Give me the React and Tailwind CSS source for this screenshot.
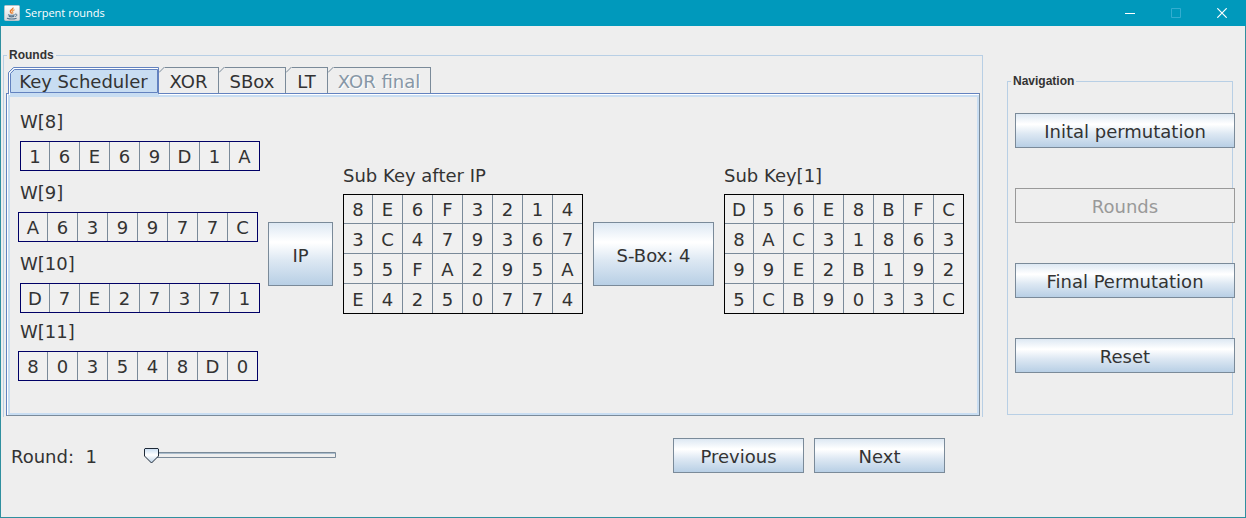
import React from 'react';

const words = [
  { label: 'W[8]', value: '16E69D1A' },
  { label: 'W[9]', value: 'A639977C', shift: true },
  { label: 'W[10]', value: 'D7E27371' },
  { label: 'W[11]', value: '803548D0', shift: true },
];
const afterIp = ['8E6F3214', '3C479367', '55FA295A', 'E4250774'];
const subKey = ['D56E8BFC', '8AC31863', '99E2B192', '5CB9033C'];

const GRADIENT =
  'border border-[#7a8a99] bg-[linear-gradient(to_bottom,#dde8f3_0%,#ffffff_30%,#ffffff_32%,#dde8f3_60%,#b8cfe5_100%)]';

function rowHeight(index, count) {
  if (count === 1) return 'h-7';
  if (index === 0) return 'h-[29px] border-b';
  if (index === count - 1) return 'h-[29px]';
  return 'h-[30px] border-b';
}

function HexTable({ rows, label, navy }) {
  return (
    <table
      aria-label={label}
      className={`w-[240px] table-fixed border-separate border-spacing-0 border bg-[#f0f0f0] ${navy ? 'border-[#000066]' : 'border-black'}`}
    >
      <tbody>
        {rows.map((row, r) => (
          <tr key={r}>
            {row.split('').map((digit, c) => (
              <td
                key={c}
                className={`border-[#7a8a99] p-0 pt-[2px] text-center leading-[26px] ${c < 7 ? 'border-r' : ''} ${c === 0 || c === 7 ? 'w-[29px]' : ''} ${rowHeight(r, rows.length)}`}
              >
                {digit}
              </td>
            ))}
          </tr>
        ))}
      </tbody>
    </table>
  );
}

function Tab({ children, className = '', disabled }) {
  return (
    <button
      type="button"
      role="tab"
      aria-selected="false"
      disabled={disabled}
      className={`relative h-[26px] border-t border-r border-[#7a8a99] pt-[2px] ${className}`}
    >
      <svg className="absolute -top-px left-0" width="6" height="6" viewBox="0 0 6 6" aria-hidden="true">
        <rect width="6" height="6" fill="#eeeeee" />
        <path d="M0 5.5 5.5 0" stroke="#7a8a99" fill="none" />
      </svg>
      {children}
    </button>
  );
}

function SelectedTab({ children }) {
  return (
    <button
      type="button"
      role="tab"
      aria-selected="true"
      className="relative z-10 -mb-[2px] ml-[2px] h-7 w-[151px] px-[2px] pt-[2px]"
    >
      <svg className="absolute inset-0 h-full w-full" viewBox="0 0 151 28" preserveAspectRatio="none" fill="none" aria-hidden="true">
        <path d="M0 5.5L5.5 0H151V28H0Z" fill="#c8ddf2" />
        <path d="M1.5 28V6L6 1.5H150" stroke="#ffffff" />
        <path d="M.5 27V5.5L5.5.5H150.5V27" stroke="#6382bf" />
        <path d="M2.5 25.5V6.5L6.5 2.5H149.5V25.5Z" stroke="#6382bf" />
      </svg>
      <span className="relative">{children}</span>
    </button>
  );
}

function JavaIcon() {
  return (
    <svg width="16" height="16" viewBox="0 0 16 16" fill="none" aria-hidden="true">
      <defs>
        <linearGradient id="tile" x1="0" y1="0" x2="0" y2="1">
          <stop offset="0" stopColor="#ffffff" />
          <stop offset="1" stopColor="#d4d8dc" />
        </linearGradient>
      </defs>
      <rect x=".5" y=".5" width="15" height="15" rx="1" fill="url(#tile)" stroke="#b9c4ca" />
      <path d="M8.9 2.6C9.6 4.2 5.6 5 6.4 6.8 6.8 7.7 7.6 8 7.6 8.7" stroke="#e8792b" strokeWidth="1.5" />
      <path d="M10.6 4.8C8.6 5.4 8 6 8.7 7c.5.8.2 1.2-.3 1.7" stroke="#ef9a4e" strokeWidth="1.2" />
      <path d="M4 9.7c2 .6 5 .6 6.8 0M4.8 11.4c1.6.5 3.8.5 5.4 0M3 13.2c2.4.8 7.3.8 9.6 0" stroke="#54738c" strokeWidth="1.2" />
      <path d="M11 9.2c2.7-.5 2.4 1.8.2 2.3" stroke="#54738c" />
    </svg>
  );
}

function NavButton({ children, disabled }) {
  return (
    <button
      type="button"
      disabled={disabled}
      className={`h-[35px] w-full pt-[3px] ${disabled ? 'border border-[#999999] bg-[#eeeeee] text-[#999999]' : GRADIENT}`}
    >
      {children}
    </button>
  );
}

export default function App() {
  return (
    <div className="flex min-h-screen flex-col border border-t-0 border-[#2f8f9f] bg-[#eeeeee] font-['DejaVu_Sans',sans-serif] text-[18px] leading-6 text-[#333333]">
      <header className="-mx-px flex h-[26px] items-center bg-[#0099bc] pl-1 text-white">
        <JavaIcon />
        <h1 className="ml-[5px] flex-1 font-['Open_Sans',sans-serif] text-[11px] leading-4">Serpent rounds</h1>
        <div className="flex h-full pr-px">
          <button type="button" aria-label="Minimize" className="flex w-[46px] items-center justify-center">
            <svg width="10" height="10" viewBox="0 0 10 10" stroke="#fff"><path d="M0 5.5h10" /></svg>
          </button>
          <button type="button" aria-label="Maximize" disabled className="flex w-[46px] items-center justify-center">
            <svg width="10" height="10" viewBox="0 0 10 10" fill="none" stroke="#33add0"><path d="M.5.5h9v9h-9z" /></svg>
          </button>
          <button type="button" aria-label="Close" className="flex w-[46px] items-center justify-center">
            <svg width="10" height="10" viewBox="0 0 10 10" stroke="#fff" strokeWidth="1.2"><path d="M.3.3l9.4 9.4M9.7.3.3 9.7" /></svg>
          </button>
        </div>
      </header>

      <div className="flex flex-1 gap-6 pr-3 pl-[2px]">
        <main className="min-w-0 flex-1 pt-[23px]">
          <fieldset className="min-w-0 border border-b-0 border-[#b8cfe5] px-[2px] pt-[5px] pb-px">
            <legend className="ml-px px-[2px] font-['Liberation_Sans',sans-serif] text-[12px] leading-[13px] font-bold">Rounds</legend>
            <div role="tablist" className="flex">
              <SelectedTab>Key Scheduler</SelectedTab>
              <Tab className="w-[60px]">XOR</Tab>
              <Tab className="w-[67px]">SBox</Tab>
              <Tab className="w-[42px]">LT</Tab>
              <Tab className="w-[103px] text-[#8797a6] [text-shadow:1px_1px_0_#ffffff]" disabled>XOR final</Tab>
            </div>
            <section role="tabpanel" aria-label="Key Scheduler" className="border border-[#6382bf] border-r-[#7a8a99] border-b-[#7a8a99]">
              <div className="border-t border-l border-white">
                <div className="flex min-h-[320px] items-start gap-[10px] border-2 border-[#c8ddf2] pl-2">
                  <div className="flex w-[242px] flex-col pt-[13px]">
                    {words.map((w, i) => (
                      <div key={w.label} className={i < 2 ? 'h-[71px]' : i === 2 ? 'h-[68px]' : ''}>
                        <p className="mb-[7px] pl-[2px]">{w.label}</p>
                        <div className={w.shift ? '' : 'pl-[2px]'}>
                          <HexTable rows={[w.value]} label={w.label} navy />
                        </div>
                      </div>
                    ))}
                  </div>
                  <button type="button" className={`mt-[125px] -ml-[2px] h-16 w-[65px] pt-[3px] ${GRADIENT}`}>IP</button>
                  <div className="pt-[67px]">
                    <p className="mb-[6px]">Sub Key after IP</p>
                    <HexTable rows={afterIp} label="Sub Key after IP" />
                  </div>
                  <button type="button" className={`mt-[125px] h-16 w-[121px] pt-[3px] ${GRADIENT}`}>S-Box: 4</button>
                  <div className="pt-[67px]">
                    <p className="mb-[6px]">Sub Key[1]</p>
                    <HexTable rows={subKey} label="Sub Key[1]" />
                  </div>
                </div>
              </div>
            </section>
          </fieldset>

          <div className="flex items-center pt-[21px] pr-[38px] pl-2">
            <label htmlFor="round" className="w-[132px] pt-[3px] whitespace-pre">Round:  1</label>
            <div className="relative h-4 w-[194px]">
              <svg width="194" height="16" viewBox="0 0 194 16" fill="none" aria-hidden="true">
                <defs>
                  <linearGradient id="knob" x1="0" y1="0" x2="0" y2="1">
                    <stop offset="0" stopColor="#c8ddf2" />
                    <stop offset=".45" stopColor="#ffffff" />
                    <stop offset="1" stopColor="#b8cfe5" />
                  </linearGradient>
                </defs>
                <path d="M8 4.5H192.5V9.5H8Z" fill="#eeeeee" stroke="#7a8a99" />
                <path d="M8 5.5H192" stroke="#a9bccc" />
                <path d="M1.5 1 2 .5H15L15.5 1V8L8.5 15 1.5 8Z" fill="url(#knob)" stroke="#1f2a38" />
              </svg>
              <input id="round" type="range" min="1" max="32" defaultValue="1" className="absolute inset-0 h-full w-full opacity-0" />
            </div>
            <div className="ml-auto flex gap-[10px]">
              <button type="button" className={`h-[35px] w-[131px] pt-[3px] ${GRADIENT}`}>Previous</button>
              <button type="button" className={`h-[35px] w-[131px] pt-[3px] ${GRADIENT}`}>Next</button>
            </div>
          </div>
        </main>

        <nav className="w-[226px] shrink-0 pt-[49px]">
          <fieldset className="min-w-0 border border-[#b8cfe5] pt-[25px] pb-[41px] pl-[7px]">
            <legend className="-ml-1 px-[2px] font-['Liberation_Sans',sans-serif] text-[12px] leading-[13px] font-bold">Navigation</legend>
            <div className="-mr-[3px] flex flex-col gap-10">
              <NavButton>Inital permutation</NavButton>
              <NavButton disabled>Rounds</NavButton>
              <NavButton>Final Permutation</NavButton>
              <NavButton>Reset</NavButton>
            </div>
          </fieldset>
        </nav>
      </div>
    </div>
  );
}
